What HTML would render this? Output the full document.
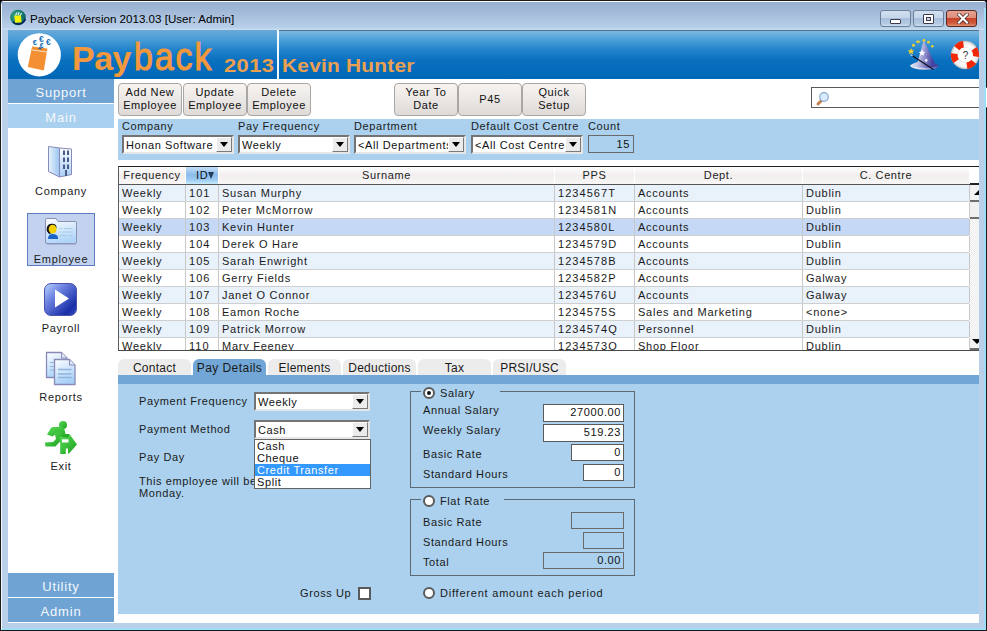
<!DOCTYPE html>
<html><head><meta charset="utf-8"><style>
*{margin:0;padding:0;box-sizing:border-box}
html,body{width:987px;height:631px;overflow:hidden;background:#000}
body{position:relative;font-family:"Liberation Sans",sans-serif;font-size:11px;color:#000}
.a{position:absolute}
.t{position:absolute;white-space:nowrap;font-size:11px;letter-spacing:0.6px;line-height:13px}
#win{left:0;top:0;width:987px;height:631px;background:#b9d0e8;border:1px solid #1a1a1a;border-radius:4px 4px 0 0}
#title{left:1px;top:1px;width:985px;height:29px;background:linear-gradient(#fbfdff 0,#fbfdff 1px,#97afcf 1px,#a4bcda 12px,#b8d0e8 27px,#c6daf0 28px);border-radius:3px 3px 0 0}
#hdr{left:8px;top:30px;width:971px;height:49px;background:linear-gradient(#4f7fa8 0,#4f7fa8 1px,#7cb7df 1px,#3f97d3 12px,#0f77c6 26px,#066cbc 48px)}
#content{left:8px;top:79px;width:971px;height:544px;background:#fff}
.nav{position:absolute;left:8px;width:106px;height:24px;background:#6fa3d3;color:#f4f8fc;font-size:13px;letter-spacing:0.8px;text-align:center;line-height:24px;padding-top:2px}
.btn{position:absolute;top:83px;height:33px;width:64px;border:1px solid #aaa6a4;border-radius:4px;background:linear-gradient(#f7f3f1,#ebe7e5 50%,#dedad8);text-align:center;font-size:11px;letter-spacing:0.6px;line-height:13px;color:#101010;padding-top:2px}
.btn1{padding-top:9px}
#filter{left:118px;top:119px;width:861px;height:41px;background:#abd1ee}
.combo{position:absolute;height:19px;background:#fff;border:2px solid;border-color:#737373 #e6e6e6 #e6e6e6 #737373}
.combo .v{position:absolute;left:2px;top:1px;font-size:11px;letter-spacing:0.6px;white-space:nowrap;overflow:hidden;line-height:14px;color:#111}
.combo .dd{position:absolute;right:0;top:0;width:16px;height:15px;background:#ebebeb;border:1px solid;border-color:#fff #7a7a7a #7a7a7a #fff}
.combo .dd:after{content:"";position:absolute;left:3px;top:4px;border-left:4px solid transparent;border-right:4px solid transparent;border-top:5px solid #000}
#tbl{left:118px;top:166px;width:861px;height:185px;background:#fff;border-top:1px solid #1e1e1e;border-left:1px solid #5a5a5a;border-bottom:1px solid #4a4a4a;overflow:hidden}
.hc{position:absolute;top:0;height:17px;background:linear-gradient(#fdfdfd,#f2eeee 50%,#f8f6f6);border-right:1px solid #fff;text-align:center;line-height:17px;letter-spacing:0.6px;color:#222}
.row{position:absolute;left:0;width:850px;height:17px;border-bottom:1px solid #cfcfcf}
.c{position:absolute;top:0;height:16px;line-height:16px;border-right:1px solid #c8c8c8;padding-left:3px;letter-spacing:0.75px;white-space:nowrap;color:#1a1a1a;overflow:hidden}
.tab{position:absolute;top:359px;width:73px;height:16px;background:#ececec;border-radius:6px 6px 0 0;text-align:center;font-size:12px;letter-spacing:0.25px;line-height:19px;color:#1a1a1a}
#strip{left:118px;top:375px;width:861px;height:9px;background:#72a6d6}
#panel{left:118px;top:384px;width:861px;height:230px;background:#abd1ee}
.lbl{position:absolute;white-space:nowrap;font-size:11px;letter-spacing:0.6px;color:#1a1a1a;line-height:13px}
.tb{position:absolute;background:#fff;border:1px solid #5a5a5a;text-align:right;padding-right:2px;font-size:11px;letter-spacing:0.6px;line-height:15px;color:#111}
.tbd{background:transparent;border-color:#6a6a6a}
.grp{position:absolute;border:1px solid #5d6a74}
.radio{position:absolute;width:12px;height:12px;border-radius:50%;border:2px solid #5a5a5a;background:#fff}
.navlbl{position:absolute;left:8px;width:106px;text-align:center;font-size:11px;letter-spacing:0.7px;color:#1a1a1a;line-height:13px}
</style></head><body>
<div id="win" class="a"></div>
<div id="title" class="a"></div>
<svg class="a" style="left:9px;top:9px;" width="18" height="18" viewBox="0 0 18 18">
<defs><radialGradient id="apg" cx="0.35" cy="0.4" r="0.75"><stop offset="0" stop-color="#3aa88a"/><stop offset="0.7" stop-color="#137068"/><stop offset="1" stop-color="#0a3a6a"/></radialGradient></defs>
<circle cx="9" cy="8.5" r="7.8" fill="url(#apg)"/>
<path d="M4 13 A7.8 7.8 0 0 0 16.5 10" stroke="#06205a" stroke-width="1.4" fill="none"/>
<path d="M5.2 6.8 L11.8 6.3 L12.6 13.2 L6.2 13.8 Z" fill="#f4f200"/>
<path d="M6.5 6.5 L8 3.5 M9 6.3 L10.2 3 M11 6.3 L12.8 4" stroke="#e0f4f0" stroke-width="1.1"/>
</svg>
<div class="t" style="left:30px;top:12px;font-size:11.6px;letter-spacing:0;color:#000">Payback Version 2013.03 [User: Admin]</div>
<div class="a" style="left:880px;top:10px;width:31px;height:17px;border-radius:3px;background:linear-gradient(#d2e0f0 0,#c4d6ea 45%,#a8c0dc 50%,#b4cae2 85%,#cfdff0 100%);border:1px solid #6b7f99;"><div class="a" style="left:9px;top:8px;width:11px;height:5px;background:#fff;border:1px solid #3a3a4a;border-radius:1px"></div></div><div class="a" style="left:913px;top:10px;width:31px;height:17px;border-radius:3px;background:linear-gradient(#d2e0f0 0,#c4d6ea 45%,#a8c0dc 50%,#b4cae2 85%,#cfdff0 100%);border:1px solid #6b7f99;"><div class="a" style="left:9px;top:3px;width:11px;height:10px;background:#fff;border:1px solid #3a3a4a;border-radius:1px"><div class="a" style="left:2px;top:2px;width:5px;height:4px;border:1px solid #3a3a4a;background:#c8d8ea"></div></div></div><div class="a" style="left:946px;top:10px;width:31px;height:17px;border-radius:3px;background:linear-gradient(#e8a393 0,#dd8c7a 45%,#c8462c 50%,#cf5a3c 80%,#e08c6c 100%);border:1px solid #5a2a24;"><svg class="a" style="left:10px;top:2px" width="12" height="11" viewBox="0 0 12 11"><path d="M2 1.5 L10 9.5 M10 1.5 L2 9.5" stroke="#3a2020" stroke-width="3.6" stroke-linecap="square"/><path d="M2 1.5 L10 9.5 M10 1.5 L2 9.5" stroke="#fff" stroke-width="2.2" stroke-linecap="square"/></svg></div>
<div class="a" style="left:8px;top:30px;width:269px;height:49px;background:linear-gradient(#6aa9d8,#4a9ed6 9px,#2484cc 19px,#0a70c0 30px,#0066b6 48px)"></div>
<div class="a" style="left:279px;top:30px;width:700px;height:49px;background:linear-gradient(#4d7190 0,#4d7190 1px,#7cb8e0 1px,#4a9fd8 10px,#2284cc 20px,#0a70c0 30px,#0066b6 48px)"></div>
<svg class="a" style="left:16px;top:32px;" width="48" height="48" viewBox="0 0 48 48">
<circle cx="23.3" cy="22.8" r="21.6" fill="#fff"/>
<path d="M16.1 14.6 L31.4 16.4 L27.8 38.6 L11.8 35 Z" fill="#f58f33"/>
<path d="M16 18 L31 20" stroke="#fde0c0" stroke-width="1"/>
<path d="M22 17 L24 14.5 L26 17.5 Z" fill="#2a5a90"/>
<g fill="#1b70b8" font-family="Liberation Sans" font-weight="bold" text-anchor="middle">
<text x="18.9" y="12.6" font-size="7.5">€</text>
<text x="25.4" y="9.6" font-size="8.5">€</text>
<text x="32.3" y="13.2" font-size="8.5">€</text>
<text x="25.8" y="15.6" font-size="7">€</text>
</g>
</svg>
<div class="t" style="left:72px;top:40px;font-size:34px;line-height:36px;font-weight:bold;letter-spacing:-0.5px;color:#f3983c">Pay</div>
<div class="t" style="left:134px;top:40px;font-size:34px;line-height:36px;letter-spacing:1.9px;color:#f3983c;-webkit-text-stroke:0.9px #f3983c;transform:scaleY(1.12);transform-origin:0 29px">back</div>
<div class="t" style="left:224px;top:56px;font-size:18px;line-height:20px;font-weight:bold;letter-spacing:0.3px;color:#eba050;transform:scaleX(1.22);transform-origin:0 0">2013</div>
<div class="a" style="left:277px;top:30px;width:2px;height:49px;background:#f2f8fc"></div>
<div class="t" style="left:282px;top:56px;font-size:18px;line-height:20px;font-weight:bold;letter-spacing:0.2px;color:#eba050;transform:scaleX(1.16);transform-origin:0 0">Kevin Hunter</div>
<svg class="a" style="left:905px;top:34px;" width="40" height="40" viewBox="0 0 40 40">
<defs><linearGradient id="hatg" x1="0.1" y1="0" x2="0.9" y2="0.15"><stop offset="0" stop-color="#f4f4fc"/><stop offset="0.4" stop-color="#c4c4e6"/><stop offset="0.7" stop-color="#8080c4"/><stop offset="1" stop-color="#4444a0"/></linearGradient>
<linearGradient id="brimg" x1="0" y1="0" x2="1" y2="0"><stop offset="0" stop-color="#fafaff"/><stop offset="0.5" stop-color="#c8c8e8"/><stop offset="1" stop-color="#5050a8"/></linearGradient></defs>
<path d="M4.8 31.5 Q9 28.5 12.5 28 L18.7 6.3 L30 29.5 Q33.8 30.5 33.6 32.3 Q20 36.5 4.8 31.5 Z" fill="url(#hatg)"/>
<path d="M4.8 31.5 Q20 36 33.6 32.3 Q33 35.5 20 35.8 Q7 35.5 4.8 31.5 Z" fill="url(#brimg)"/>
<path d="M17 15.5 l1 2.2 l2.3 0.3 l-1.7 1.5 l0.5 2.3 l-2.1 -1.2 l-2.1 1.2 l0.5 -2.3 l-1.7 -1.5 l2.3 -0.3 Z" fill="#fafaff"/>
<path d="M20.5 24.5 l2.2 1.3 l-1 2.5 l-2 -1.5 Z" fill="#f0f0ff"/>
<path d="M7 21.5 L28.5 35.5" stroke="#101020" stroke-width="1.3"/>
<path d="M5.5 20.5 L7.5 22" stroke="#a8d8f8" stroke-width="1.5"/>
<g fill="#f0d030">
<path d="M6 14 l1 2.2 l2.3 0.3 l-1.7 1.5 l0.5 2.3 l-2.1 -1.2 l-2.1 1.2 l0.5 -2.3 l-1.7 -1.5 l2.3 -0.3 Z"/>
<circle cx="8.5" cy="11.3" r="1.5"/><ellipse cx="13" cy="7.8" rx="1.9" ry="1.3"/><circle cx="19" cy="6.3" r="1.4"/><circle cx="23.5" cy="8.2" r="1.4"/><circle cx="27.3" cy="12.3" r="1.3"/>
</g>
</svg>
<svg class="a" style="left:948px;top:38px;" width="31" height="34" viewBox="0 0 31 34">
<defs><radialGradient id="lbg" cx="0.5" cy="0.5" r="0.5"><stop offset="0.5" stop-color="#d8d8d8"/><stop offset="0.62" stop-color="#ffffff"/><stop offset="0.85" stop-color="#f0f0f0"/><stop offset="1" stop-color="#b8b8b8"/></radialGradient></defs>
<circle cx="17" cy="17" r="14.2" fill="url(#lbg)"/>
<path d="M8.73 10.06 A10.8 10.8 0 0 1 15.50 6.31" stroke="#f02808" stroke-width="6.6" fill="none"/><path d="M25.95 10.96 A10.8 10.8 0 0 1 27.69 18.50" stroke="#f02808" stroke-width="6.6" fill="none"/><path d="M25.51 23.65 A10.8 10.8 0 0 1 18.88 27.64" stroke="#f02808" stroke-width="6.6" fill="none"/><path d="M8.15 23.19 A10.8 10.8 0 0 1 6.28 15.68" stroke="#f02808" stroke-width="6.6" fill="none"/>
<circle cx="17.5" cy="17" r="7.6" fill="#fff"/>
<text x="17.5" y="21" font-family="Liberation Sans" font-size="10.5" text-anchor="middle" fill="#404040">?</text>
</svg>
<div id="content" class="a"></div>
<div class="nav" style="top:79px">Support</div>
<div class="nav" style="top:104px;background:#aad0ef">Main</div>
<div class="nav" style="top:573px">Utility</div>
<div class="nav" style="top:598px">Admin</div>
<svg class="a" style="left:46px;top:144px;" width="28" height="36" viewBox="0 0 28 36">
<defs><linearGradient id="bldl" x1="0" y1="0" x2="1" y2="0"><stop offset="0" stop-color="#e8f4ff"/><stop offset="1" stop-color="#9cc4f0"/></linearGradient>
<linearGradient id="bldr" x1="0" y1="0" x2="0" y2="1"><stop offset="0" stop-color="#f8fcff"/><stop offset="1" stop-color="#a8cff5"/></linearGradient></defs>
<path d="M2.5 2.5 L13.5 4 L13.5 33 L2.5 27.5 Z" fill="url(#bldl)" stroke="#8a8ab8" stroke-width="1"/>
<path d="M13.5 4 L25.5 5 L25.5 30.5 L13.5 33 Z" fill="url(#bldr)" stroke="#8a8ab8" stroke-width="1"/>
<g fill="#4a5a88">
<rect x="17" y="6.5" width="2" height="4.5"/><rect x="21" y="6.5" width="2" height="4.5"/>
<rect x="17" y="13.5" width="2" height="4.5"/><rect x="21" y="13.5" width="2" height="4.5"/>
<rect x="17" y="20.5" width="2" height="4.5"/><rect x="21" y="20.5" width="2" height="4.5"/>
<rect x="19" y="26" width="2" height="6"/>
</g>
</svg>
<div class="navlbl" style="top:185px">Company</div>
<div class="a" style="left:27px;top:213px;width:68px;height:53px;background:#c3d3ef;border:1px solid #5b7cc0"></div>
<svg class="a" style="left:43px;top:216px;" width="36" height="30" viewBox="0 0 36 30">
<defs><linearGradient id="empg" x1="0" y1="0" x2="0.3" y2="1"><stop offset="0" stop-color="#ffffff"/><stop offset="1" stop-color="#b0d4f8"/></linearGradient></defs>
<path d="M2.5 4 Q2.5 2.5 4 2.5 L13 2.5 L15 5.5 L32 5.5 Q33.5 5.5 33.5 7 L33.5 26 Q33.5 27.5 32 27.5 L4 27.5 Q2.5 27.5 2.5 26 Z" fill="url(#empg)" stroke="#8a90b8" stroke-width="1"/>
<path d="M4 28 L33 28" stroke="#9098c0" stroke-width="1"/>
<path d="M3.8 15 Q3 8 8.5 7.8 Q13 7.5 13.5 11 L12.5 16 L6 18 Z" fill="#111"/>
<ellipse cx="9.6" cy="13.2" rx="3.9" ry="4.4" fill="#f4d000"/>
<path d="M5 23 Q5 18 9.5 18 Q14.5 18 15 21.5 L15 23 L5 23 Z" fill="#1a64c8"/>
<g stroke="#a8cce8" stroke-width="1">
<path d="M16.5 12.5 H19 M21 12.5 H29.5"/><path d="M16.5 16 H18 M19.5 16 H29.5"/><path d="M16.5 19.5 H24 M25.5 19.5 H29.5"/>
</g>
</svg>
<div class="navlbl" style="top:253px">Employee</div>
<svg class="a" style="left:43px;top:282px;" width="36" height="36" viewBox="0 0 36 36">
<defs><linearGradient id="plg" x1="0" y1="0" x2="1" y2="1"><stop offset="0" stop-color="#b8d8ff"/><stop offset="0.35" stop-color="#6c80e0"/><stop offset="0.8" stop-color="#1a2ea8"/><stop offset="1" stop-color="#3a50c0"/></linearGradient></defs>
<rect x="1.5" y="1.5" width="32" height="32" rx="6.5" fill="url(#plg)" stroke="#4a52a8" stroke-width="1"/>
<path d="M12 7.5 L12 25.5 L26 16.5 Z" fill="#fff"/>
</svg>
<div class="navlbl" style="top:322px">Payroll</div>
<svg class="a" style="left:44px;top:350px;" width="34" height="38" viewBox="0 0 34 38">
<defs><linearGradient id="rpg" x1="0" y1="0" x2="0.4" y2="1"><stop offset="0" stop-color="#ffffff"/><stop offset="1" stop-color="#a8d0f8"/></linearGradient></defs>
<path d="M2.5 2.5 L17.5 2.5 L23 8 L23 27.5 L2.5 27.5 Z" fill="url(#rpg)" stroke="#8a8ab8" stroke-width="1.3"/>
<path d="M17.5 2.5 L17.5 8 L23 8" fill="#e0e8f8" stroke="#8a8ab8" stroke-width="1"/>
<g stroke="#90b4dc" stroke-width="1.2"><path d="M6 12.5 H12 M6 16.5 H12 M6 20 H12"/></g>
<path d="M10.5 9.5 L25.5 9.5 L31 15 L31 34.5 L10.5 34.5 Z" fill="url(#rpg)" stroke="#8a8ab8" stroke-width="1.3"/>
<path d="M25.5 9.5 L25.5 15 L31 15" fill="#e0e8f8" stroke="#8a8ab8" stroke-width="1"/>
<g stroke="#90b4dc" stroke-width="1.3"><path d="M14 19.5 H27.5 M14 24 H27.5 M14 27.5 H27.5"/></g>
</svg>
<div class="navlbl" style="top:391px">Reports</div>
<svg class="a" style="left:40px;top:418px;" width="42" height="42" viewBox="0 0 42 42">
<defs><linearGradient id="exg" x1="0" y1="0" x2="1" y2="1"><stop offset="0" stop-color="#58dc58"/><stop offset="1" stop-color="#1ea01e"/></linearGradient></defs>
<g fill="url(#exg)">
<circle cx="23" cy="7" r="4"/>
<path d="M7 16.5 L11 10 Q11.8 9 13.5 9 L21.5 9 Q24 9 24.5 11.5 L25.5 16 L29.5 16 L29.5 20 L22 20 L19.5 15.5 L16.5 15.5 L12.5 18.5 Z"/>
<path d="M14.5 14.5 L21 14 L23 20.5 L20 23.5 L15.5 28.5 L5.5 28.5 L5 24.5 L13 24 L16 21 Z"/>
<path d="M19.5 19 L29.5 19 L29.5 16 L37 26.5 L29 35.5 L28 35.5 L28 30.5 L25.8 30.5 L25.8 36 L20.2 36 L20.2 26 Z"/>
</g>
<rect x="22" y="21.3" width="6.5" height="3.2" fill="#fff"/>
</svg>
<div class="navlbl" style="top:460px">Exit</div>
<div class="btn" style="left:118px">Add New<br>Employee</div>
<div class="btn" style="left:183px">Update<br>Employee</div>
<div class="btn" style="left:247px">Delete<br>Employee</div>
<div class="btn" style="left:394px">Year To<br>Date</div>
<div class="btn btn1" style="left:458px">P45</div>
<div class="btn" style="left:522px">Quick<br>Setup</div>
<div class="a" style="left:811px;top:87px;width:180px;height:21px;background:#fff;border:1px solid #5a5a5a"></div>
<div class="a" style="left:979px;top:30px;width:7px;height:600px;background:#b9d0e8"></div>
<div class="a" style="left:984px;top:8px;width:2px;height:622px;background:#9fdcf5"></div>
<div class="a" style="left:1px;top:4px;width:1px;height:626px;background:#f4f8fc"></div>
<div class="a" style="left:2px;top:628px;width:983px;height:2px;background:#9fdcf5"></div>
<svg class="a" style="left:815px;top:91px;" width="16" height="16" viewBox="0 0 16 16">
<path d="M3 13 L6.5 9.5" stroke="#c08050" stroke-width="3" stroke-linecap="round"/>
<circle cx="9" cy="6" r="4.3" fill="#d8ecff" stroke="#8aa8c8" stroke-width="1.2"/>
</svg>
<div id="filter" class="a"></div>
<div class="lbl" style="left:122px;top:120px;">Company</div>
<div class="lbl" style="left:238px;top:120px;">Pay Frequency</div>
<div class="lbl" style="left:354px;top:120px;">Department</div>
<div class="lbl" style="left:471px;top:120px;">Default Cost Centre</div>
<div class="lbl" style="left:588px;top:120px;width:32px;overflow:hidden;">Count</div>
<div class="combo" style="left:122px;top:135px;width:112px"><div class="v" style="width:90px">Honan Software</div><div class="dd"></div></div>
<div class="combo" style="left:238px;top:135px;width:112px"><div class="v" style="width:90px">Weekly</div><div class="dd"></div></div>
<div class="combo" style="left:354px;top:135px;width:112px"><div class="v" style="width:90px">&lt;All Departments&gt;</div><div class="dd"></div></div>
<div class="combo" style="left:471px;top:135px;width:112px"><div class="v" style="width:90px">&lt;All Cost Centres&gt;</div><div class="dd"></div></div>
<div class="tb tbd" style="left:588px;top:135px;width:46px;height:18px;line-height:16px;padding-right:3px">15</div>
<div id="tbl" class="a"><div class="hc" style="left:0px;width:67px">Frequency</div><div class="hc" style="left:67px;width:33px;background:linear-gradient(#c4def8,#8cbcec 45%,#9ccaf2 75%,#c8ecfc);border-right:1px solid #fff;text-align:left;padding-left:10px;color:#111">I<span style="letter-spacing:0">D</span><span style="display:inline-block;vertical-align:top;margin-top:5px;border-left:3.5px solid transparent;border-right:3.5px solid transparent;border-top:7px solid #223a5a"></span></div><div class="hc" style="left:100px;width:336px">Surname</div><div class="hc" style="left:436px;width:80px">PPS</div><div class="hc" style="left:516px;width:168px">Dept.</div><div class="hc" style="left:684px;width:167px">C. Centre</div><div class="a" style="left:0;top:17px;width:851px;height:1px;background:#555"></div><div class="row" style="top:18px;background:#e9f1fb"><div class="c" style="left:0px;width:67px">Weekly</div><div class="c" style="left:67px;width:33px;letter-spacing:1.05px">101</div><div class="c" style="left:100px;width:336px">Susan Murphy</div><div class="c" style="left:436px;width:80px;letter-spacing:1.05px">1234567T</div><div class="c" style="left:516px;width:168px">Accounts</div><div class="c" style="left:684px;width:167px">Dublin</div></div><div class="row" style="top:35px;background:#fff"><div class="c" style="left:0px;width:67px">Weekly</div><div class="c" style="left:67px;width:33px;letter-spacing:1.05px">102</div><div class="c" style="left:100px;width:336px">Peter McMorrow</div><div class="c" style="left:436px;width:80px;letter-spacing:1.05px">1234581N</div><div class="c" style="left:516px;width:168px">Accounts</div><div class="c" style="left:684px;width:167px">Dublin</div></div><div class="row" style="top:52px;background:#c5d9f7"><div class="c" style="left:0px;width:67px">Weekly</div><div class="c" style="left:67px;width:33px;letter-spacing:1.05px">103</div><div class="c" style="left:100px;width:336px">Kevin Hunter</div><div class="c" style="left:436px;width:80px;letter-spacing:1.05px">1234580L</div><div class="c" style="left:516px;width:168px">Accounts</div><div class="c" style="left:684px;width:167px">Dublin</div></div><div class="row" style="top:69px;background:#fff"><div class="c" style="left:0px;width:67px">Weekly</div><div class="c" style="left:67px;width:33px;letter-spacing:1.05px">104</div><div class="c" style="left:100px;width:336px">Derek O Hare</div><div class="c" style="left:436px;width:80px;letter-spacing:1.05px">1234579D</div><div class="c" style="left:516px;width:168px">Accounts</div><div class="c" style="left:684px;width:167px">Dublin</div></div><div class="row" style="top:86px;background:#e9f1fb"><div class="c" style="left:0px;width:67px">Weekly</div><div class="c" style="left:67px;width:33px;letter-spacing:1.05px">105</div><div class="c" style="left:100px;width:336px">Sarah Enwright</div><div class="c" style="left:436px;width:80px;letter-spacing:1.05px">1234578B</div><div class="c" style="left:516px;width:168px">Accounts</div><div class="c" style="left:684px;width:167px">Dublin</div></div><div class="row" style="top:103px;background:#fff"><div class="c" style="left:0px;width:67px">Weekly</div><div class="c" style="left:67px;width:33px;letter-spacing:1.05px">106</div><div class="c" style="left:100px;width:336px">Gerry Fields</div><div class="c" style="left:436px;width:80px;letter-spacing:1.05px">1234582P</div><div class="c" style="left:516px;width:168px">Accounts</div><div class="c" style="left:684px;width:167px">Galway</div></div><div class="row" style="top:120px;background:#e9f1fb"><div class="c" style="left:0px;width:67px">Weekly</div><div class="c" style="left:67px;width:33px;letter-spacing:1.05px">107</div><div class="c" style="left:100px;width:336px">Janet O Connor</div><div class="c" style="left:436px;width:80px;letter-spacing:1.05px">1234576U</div><div class="c" style="left:516px;width:168px">Accounts</div><div class="c" style="left:684px;width:167px">Galway</div></div><div class="row" style="top:137px;background:#fff"><div class="c" style="left:0px;width:67px">Weekly</div><div class="c" style="left:67px;width:33px;letter-spacing:1.05px">108</div><div class="c" style="left:100px;width:336px">Eamon Roche</div><div class="c" style="left:436px;width:80px;letter-spacing:1.05px">1234575S</div><div class="c" style="left:516px;width:168px">Sales and Marketing</div><div class="c" style="left:684px;width:167px">&lt;none&gt;</div></div><div class="row" style="top:154px;background:#e9f1fb"><div class="c" style="left:0px;width:67px">Weekly</div><div class="c" style="left:67px;width:33px;letter-spacing:1.05px">109</div><div class="c" style="left:100px;width:336px">Patrick Morrow</div><div class="c" style="left:436px;width:80px;letter-spacing:1.05px">1234574Q</div><div class="c" style="left:516px;width:168px">Personnel</div><div class="c" style="left:684px;width:167px">Dublin</div></div><div class="row" style="top:171px;background:#fff"><div class="c" style="left:0px;width:67px">Weekly</div><div class="c" style="left:67px;width:33px;letter-spacing:1.05px">110</div><div class="c" style="left:100px;width:336px">Mary Feeney</div><div class="c" style="left:436px;width:80px;letter-spacing:1.05px">1234573O</div><div class="c" style="left:516px;width:168px">Shop Floor</div><div class="c" style="left:684px;width:167px">Dublin</div></div><div class="a" style="left:851px;top:0;width:10px;height:183px;background:#fff"></div>
<div class="a" style="left:851px;top:16px;width:10px;height:2px;background:#222"></div>
<div class="a" style="left:851px;top:18px;width:10px;height:165px;background:repeating-conic-gradient(#fdfdfd 0 25%,#ebebeb 0 50%) 0 0/2px 2px"></div>
<div class="a" style="left:851px;top:18px;width:10px;height:17px;background:#f2f2f2;border-bottom:2px solid #6e6e6e"></div>
<div class="a" style="left:855px;top:23px;border-left:5px solid transparent;border-right:5px solid transparent;border-bottom:5px solid #000"></div>
<div class="a" style="left:851px;top:35px;width:10px;height:17px;background:#f0f0f0;border-bottom:2px solid #6e6e6e"></div>
<div class="a" style="left:851px;top:166px;width:10px;height:17px;background:#f2f2f2;border-bottom:2px solid #6e6e6e"></div>
<div class="a" style="left:853px;top:172px;border-left:5px solid transparent;border-right:5px solid transparent;border-top:5px solid #000"></div></div>
<div class="tab" style="left:118px;">Contact</div>
<div class="tab" style="left:193px;background:#72a6d6;letter-spacing:0.45px;">Pay Details</div>
<div class="tab" style="left:268px;">Elements</div>
<div class="tab" style="left:343px;">Deductions</div>
<div class="tab" style="left:418px;">Tax</div>
<div class="tab" style="left:493px;">PRSI/USC</div>
<div id="strip" class="a"></div>
<div id="panel" class="a"></div>
<div class="lbl" style="left:139px;top:395px">Payment Frequency</div>
<div class="combo" style="left:254px;top:392px;width:116px"><div class="v" style="width:94px">Weekly</div><div class="dd"></div></div>
<div class="lbl" style="left:139px;top:423px">Payment Method</div>
<div class="combo" style="left:254px;top:420px;width:116px"><div class="v" style="width:94px">Cash</div><div class="dd"></div></div>
<div class="lbl" style="left:139px;top:451px">Pay Day</div>
<div class="lbl" style="left:139px;top:475px;line-height:12px">This employee will be paid on<br>Monday.</div>
<div class="a" style="left:254px;top:439px;width:117px;height:50px;background:#fff;border:1px solid #646464"></div>
<div class="a" style="left:255px;top:464px;width:115px;height:12px;background:#3399ff"></div>
<div class="lbl" style="left:257px;top:440px;line-height:12px;color:#111">Cash</div>
<div class="lbl" style="left:257px;top:452px;line-height:12px;color:#111">Cheque</div>
<div class="lbl" style="left:257px;top:464px;line-height:12px;color:#fff">Credit Transfer</div>
<div class="lbl" style="left:257px;top:476px;line-height:12px;color:#111">Split</div>
<div class="grp" style="left:410px;top:391px;width:225px;height:97px"></div>
<div class="a" style="left:421px;top:386px;width:79px;height:10px;background:#abd1ee"></div>
<div class="radio" style="left:423px;top:387px"></div>
<div class="a" style="left:427px;top:391px;width:4px;height:4px;border-radius:50%;background:#111"></div>
<div class="lbl" style="left:440px;top:387px">Salary</div>
<div class="lbl" style="left:423px;top:404px">Annual Salary</div>
<div class="lbl" style="left:423px;top:424px">Weekly Salary</div>
<div class="lbl" style="left:423px;top:448px">Basic Rate</div>
<div class="lbl" style="left:423px;top:468px">Standard Hours</div>
<div class="tb" style="left:543px;top:404px;width:81px;height:18px">27000.00</div>
<div class="tb" style="left:543px;top:424px;width:81px;height:18px">519.23</div>
<div class="tb" style="left:571px;top:444px;width:53px;height:17px">0</div>
<div class="tb" style="left:583px;top:464px;width:41px;height:17px">0</div>
<div class="grp" style="left:410px;top:499px;width:225px;height:77px"></div>
<div class="a" style="left:421px;top:494px;width:83px;height:10px;background:#abd1ee"></div>
<div class="radio" style="left:423px;top:495px"></div>
<div class="lbl" style="left:440px;top:495px">Flat Rate</div>
<div class="lbl" style="left:423px;top:516px">Basic Rate</div>
<div class="lbl" style="left:423px;top:536px">Standard Hours</div>
<div class="lbl" style="left:423px;top:556px">Total</div>
<div class="tb tbd" style="left:571px;top:512px;width:53px;height:17px"></div>
<div class="tb tbd" style="left:583px;top:532px;width:41px;height:17px"></div>
<div class="tb tbd" style="left:543px;top:552px;width:81px;height:17px">0.00</div>
<div class="radio" style="left:423px;top:587px"></div>
<div class="lbl" style="left:440px;top:587px;letter-spacing:0.78px">Different amount each period</div>
<div class="lbl" style="left:300px;top:587px">Gross Up</div>
<div class="a" style="left:358px;top:587px;width:13px;height:13px;background:#fff;border:2px solid #5a5a5a"></div>
</body></html>
